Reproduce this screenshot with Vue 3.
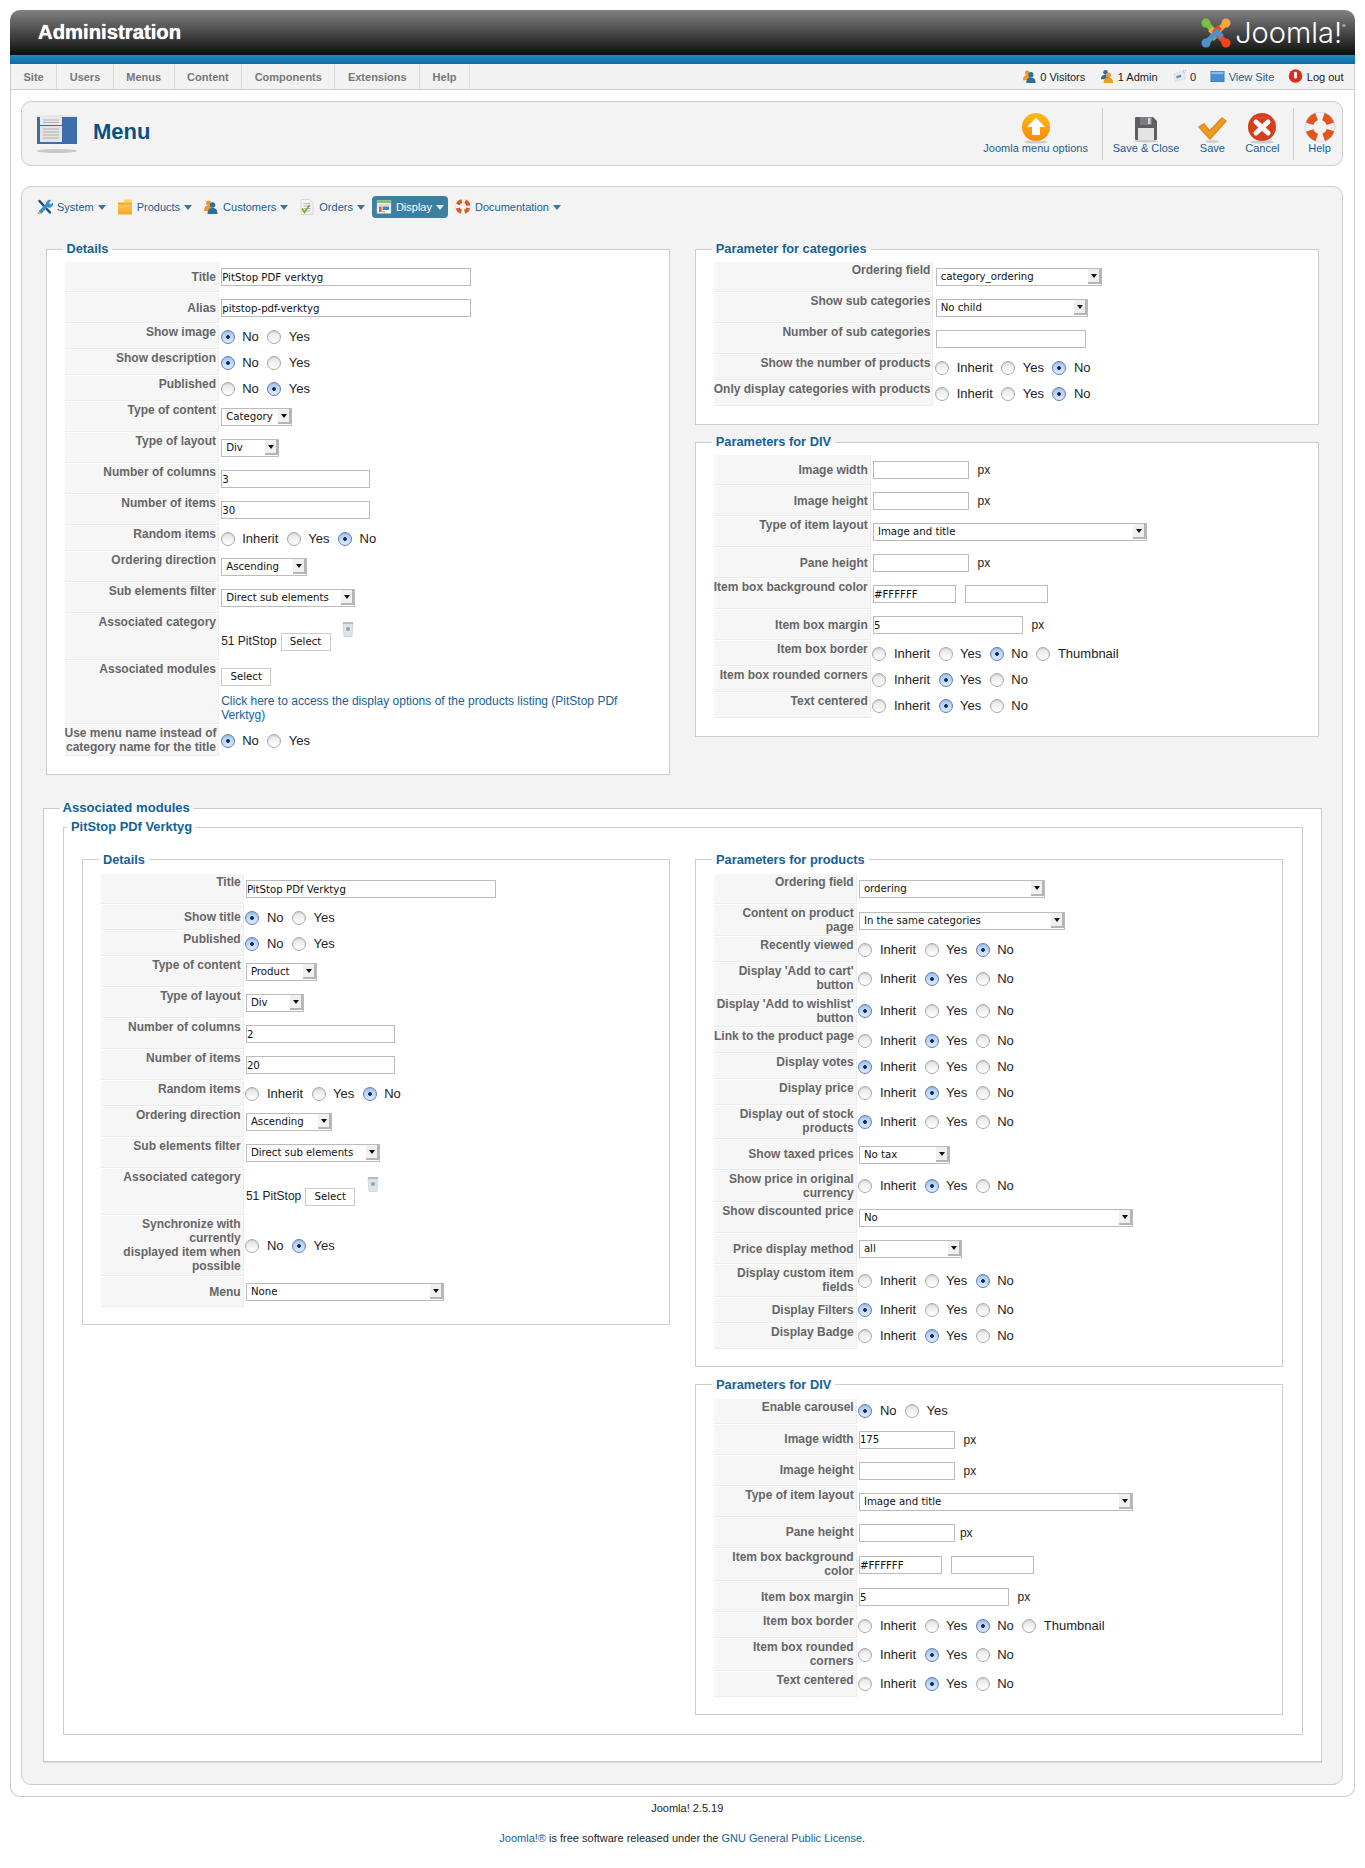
<script setup>
const T = (label, value, w, o = {}) => ({ kind: 'text', label, value, w, ...o })
const S = (label, value, w, o = {}) => ({ kind: 'select', label, value, w, ...o })
const R = (label, opts, on, o = {}) => ({ kind: 'radio', label, opts, on, ...o })
const NY = ['No', 'Yes']
const IYN = ['Inherit', 'Yes', 'No']
const TWO = { h: 31.5 }

const sections = [
  {
    cls: 'top',
    cols: [
      [{
        legend: 'Details', lw: 154.5, rows: [
          T('Title', 'PitStop PDF verktyg', 250, { mid: true }),
          T('Alias', 'pitstop-pdf-verktyg', 250, { mid: true }),
          R('Show image', NY, 0), R('Show description', NY, 0), R('Published', NY, 1),
          S('Type of content', 'Category', 71), S('Type of layout', 'Div', 58),
          T('Number of columns', '3', 149), T('Number of items', '30', 149),
          R('Random items', IYN, 2),
          S('Ordering direction', 'Ascending', 86), S('Sub elements filter', 'Direct sub elements', 134),
          { kind: 'assoc', label: 'Associated category', h: 45.7 },
          { kind: 'modules', label: 'Associated modules', h: 63.5 },
          R('Use menu name instead of\ncategory name for the title', NY, 0, { h: 31 })
        ]
      }],
      [{
        legend: 'Parameter for categories', lw: 219.7, rows: [
          S('Ordering field', 'category_ordering', 166.7), S('Show sub categories', 'No child', 152),
          T('Number of sub categories', '', 150),
          R('Show the number of products', IYN, 2), R('Only display categories with products', IYN, 2)
        ]
      }, {
        legend: 'Parameters for DIV', lw: 157, rows: [
          T('Image width', '', 96, { mid: true, px: 1 }), T('Image height', '', 96, { mid: true, px: 1 }),
          S('Type of item layout', 'Image and title', 274),
          T('Pane height', '', 96, { mid: true, px: 1 }),
          { kind: 'pair', label: 'Item box background color', value: '#FFFFFF' },
          T('Item box margin', '5', 150, { mid: true, px: 1 }),
          R('Item box border', [...IYN, 'Thumbnail'], 2), R('Item box rounded corners', IYN, 1), R('Text centered', IYN, 1)
        ]
      }]
    ]
  },
  {
    cls: 'mods',
    legend: 'Associated modules',
    sub: 'PitStop PDf Verktyg',
    cols: [
      [{
        legend: 'Details', lw: 142.7, rows: [
          T('Title', 'PitStop PDf Verktyg', 250),
          R('Show title', NY, 0, { mid: true }), R('Published', NY, 0),
          S('Type of content', 'Product', 71), S('Type of layout', 'Div', 58),
          T('Number of columns', '2', 149), T('Number of items', '20', 149),
          R('Random items', IYN, 2),
          S('Ordering direction', 'Ascending', 86.5), S('Sub elements filter', 'Direct sub elements', 134.5),
          { kind: 'assoc', label: 'Associated category', h: 46 },
          R('Synchronize with\ncurrently\ndisplayed item when\npossible', NY, 1, { h: 60 }),
          S('Menu', 'None', 198, { mid: true })
        ]
      }],
      [{
        legend: 'Parameters for products', lw: 142.7, rows: [
          S('Ordering field', 'ordering', 186),
          S('Content on product\npage', 'In the same categories', 206, { h: 31 }),
          R('Recently viewed', IYN, 2),
          R("Display 'Add to cart'\nbutton", IYN, 1, TWO), R("Display 'Add to wishlist'\nbutton", IYN, 0, TWO),
          R('Link to the product page', IYN, 1), R('Display votes', IYN, 0), R('Display price', IYN, 1),
          R('Display out of stock\nproducts', IYN, 0, { h: 32.4 }),
          S('Show taxed prices', 'No tax', 91.5, { mid: true }),
          R('Show price in original\ncurrency', IYN, 1, TWO),
          S('Show discounted price', 'No', 274),
          S('Price display method', 'all', 103, { mid: true }),
          R('Display custom item\nfields', IYN, 2, { h: 31.7 }),
          R('Display Filters', IYN, 0, { mid: true }), R('Display Badge', IYN, 1)
        ]
      }, {
        legend: 'Parameters for DIV', lw: 142.7, rows: [
          R('Enable carousel', NY, 0),
          T('Image width', '175', 96, { mid: true, px: 1 }), T('Image height', '', 96, { mid: true, px: 1 }),
          S('Type of item layout', 'Image and title', 274),
          T('Pane height', '', 96, { mid: true, px: 1, tight: true }),
          { kind: 'pair', label: 'Item box background\ncolor', value: '#FFFFFF', h: 32.2 },
          T('Item box margin', '5', 150, { mid: true, px: 1 }),
          R('Item box border', [...IYN, 'Thumbnail'], 2),
          R('Item box rounded\ncorners', IYN, 1, { h: 31.4 }), R('Text centered', IYN, 1)
        ]
      }]
    ]
  }
]

const rowH = r => r.h ?? (r.kind === 'radio' ? 25 : 30)
const px = v => v + 'px'

const menus = ['Site', 'Users', 'Menus', 'Content', 'Components', 'Extensions', 'Help']
const status = [
  { icon: 'users', text: '0 Visitors' }, { icon: 'users2', text: '1 Admin' },
  { icon: 'msg', text: '0' }, { icon: 'view', text: 'View Site', link: true }, { icon: 'logout', text: 'Log out' }
]
const tools = [
  { icon: 'up', text: 'Joomla menu options' }, { sep: true },
  { icon: 'floppy', text: 'Save & Close' }, { icon: 'check', text: 'Save' }, { icon: 'cancel', text: 'Cancel' }, { sep: true },
  { icon: 'ring', text: 'Help', cls: 'help' }
]
const nav = [
  { icon: 'tools', text: 'System' }, { icon: 'box', text: 'Products' }, { icon: 'users', text: 'Customers' },
  { icon: 'orders', text: 'Orders' }, { icon: 'display', text: 'Display', on: true }, { icon: 'ring', text: 'Documentation' }
]
const ringPaths = `<circle cx="16" cy="15" r="11" fill="none" stroke="#f1f1f1" stroke-width="8"/>
<circle cx="16" cy="15" r="11" fill="none" stroke="#e0561f" stroke-width="8" stroke-dasharray="10.3 7" stroke-dashoffset="-3.1"/>
<circle cx="16" cy="15" r="15" fill="none" stroke="#c9c9c9" stroke-width=".6"/>`
const icons = {
  up: `<defs><linearGradient id="gu" x1="0" y1="0" x2="0" y2="1"><stop offset="0" stop-color="#ffb915"/><stop offset="1" stop-color="#f98a05"/></linearGradient></defs>
<ellipse cx="16" cy="30" rx="12" ry="1.6" fill="#ccc"/><circle cx="16" cy="15" r="14" fill="url(#gu)"/><path d="M16 5.5 25 15h-5v8h-8v-8H7z" fill="#fff"/>`,
  floppy: `<ellipse cx="16" cy="29" rx="12" ry="1.5" fill="#ccc"/><path d="M6 5h17l4 4v18a1 1 0 0 1-1 1H6a1 1 0 0 1-1-1V6a1 1 0 0 1 1-1z" fill="#5d5f63"/><rect x="10" y="5" width="12" height="8" fill="#7b7d80"/><rect x="18" y="6" width="2.5" height="6" fill="#d5d5d5"/><rect x="8" y="16" width="16" height="12" fill="#e4e4e4"/>`,
  check: `<ellipse cx="16" cy="29.5" rx="7" ry="1.3" fill="#ccc"/><path d="M3 15 8 12 13.500 19 26 6 30 9 14 27z" fill="#f09a22" stroke="#e28a18" stroke-linejoin="round" stroke-width="1.500"/>`,
  cancel: `<ellipse cx="16" cy="30" rx="12" ry="1.600" fill="#ccc"/><circle cx="16" cy="15" r="14" fill="#d63f1c"/><path d="M8 5h16a13 9 0 0 1-16 0z" fill="#e9573b" opacity=".5"/><path d="M10 10l12 11M22 10 10 21" stroke="#fff" stroke-width="5" stroke-linecap="round"/>`,
  ring: ringPaths,
  users: `<circle cx="11" cy="8" r="5" fill="#f09a22"/><path d="M2 24c0-8 4-11 9-11s9 3 9 11z" fill="#f09a22"/><circle cx="19" cy="12" r="5.500" fill="#2b6f9f"/><path d="M9 30c0-9 4-12 10-12s10 3 10 12z" fill="#2b6f9f"/>`,
  users2: `<circle cx="14" cy="7" r="5" fill="#2b6f9f"/><path d="M4 22c0-7 4-10 10-10s9 3 9 10z" fill="#2b6f9f"/><circle cx="20" cy="13" r="5.500" fill="#f09a22"/><path d="M10 30c0-9 4-12 10-12s10 3 10 12z" fill="#f09a22"/>`,
  msg: `<path d="M4 10 25 4l3 17-21 6z" fill="#e6eaee" stroke="#c9ced3"/><path d="M9 15l10-3 1 5-10 3z" fill="#5c93bd"/><rect x="24" y="3" width="5" height="5" fill="#fff" stroke="#8aa9c4"/>`,
  view: `<rect x="2" y="5" width="28" height="22" fill="#4a8fd6" stroke="#2f6ea8" stroke-width="1.500"/><rect x="3" y="6" width="26" height="5" fill="#8ebbe8"/>`,
  logout: `<circle cx="16" cy="15" r="14.500" fill="#d8301a"/><rect x="13" y="6" width="6" height="14" rx="2.500" fill="#fff"/>`,
  tools: `<path d="M5 4 26 27" stroke="#1f4e79" stroke-width="5" stroke-linecap="round"/><path d="M6 27 22 10" stroke="#3d8ec9" stroke-width="7"/><path d="M18 11a8 8 0 0 1 10-9l-4 6 3 3 5-4a8 8 0 0 1-10 10z" fill="#3d8ec9"/><path d="M3 25l4 4-3 2-3-3z" fill="#f09a22"/>`,
  box: `<defs><linearGradient id="gb" x1="0" y1="0" x2="0" y2="1"><stop offset="0" stop-color="#ffd777"/><stop offset="1" stop-color="#f7a520"/></linearGradient></defs><path d="M2 6h11l2-5h15v30H2z" fill="url(#gb)"/><rect x="2" y="8" width="28" height="3" fill="#f5a623"/>`,
  orders: `<path d="M4 1h17l7 7v23H4z" fill="#f4f4f4" stroke="#b9b9b9"/><path d="M9 9h14M9 14h14M9 19h14M9 24h14" stroke="#a5a5a5" stroke-width="1.500"/><path d="M6 19l5 8 10-15" fill="none" stroke="#7cae3c" stroke-width="3.500"/>`,
  display: `<rect x="2" y="3" width="28" height="26" fill="#f6f6f6" stroke="#a5b6bd"/><rect x="2" y="3" width="28" height="5" fill="#8cc06b"/><rect x="5" y="11" width="22" height="2" fill="#c0c0c0"/><rect x="6" y="15" width="5" height="11" fill="#e0563a"/><rect x="13" y="15" width="13" height="7" fill="#3e86c4"/><rect x="13" y="24" width="5" height="3" fill="#f0a83a"/>`,
  page: `<ellipse cx="21" cy="37" rx="20" ry="2" fill="#c9c9c9"/><rect x="1" y="1" width="40" height="29" fill="#3d6cab"/><rect x="1" y="1" width="40" height="2" fill="#e7e7e7"/><rect x="4" y="3" width="22" height="8" fill="#e9e9e9"/><rect x="4" y="12" width="22" height="16" fill="#e4e4e4"/><path d="M7 15h16M7 18h16M7 21h16M7 24h16M7 6h16M7 8.500h16" stroke="#a3a3a3" stroke-width=".8"/>`
}
const joomlaArms = ['#7ac143', '#f9a541', '#f44321', '#5091cd']
</script>

<template>
  <div class="page">
    <header class="head">
      <h1 class="brand">Administration</h1>
      <div class="logo">
        <svg class="logo-mark" viewBox="0 0 30 30" aria-hidden="true">
          <g v-for="(c, i) in joomlaArms" :key="c" :transform="`rotate(${i * 90} 15 15)`">
            <path d="M5 5 16 16 11 21" fill="none" :stroke="c" stroke-width="5.500" stroke-linejoin="round" />
            <circle cx="5" cy="5" r="4.500" :fill="c" />
          </g>
        </svg>
        <span class="logo-text">Joomla!<sup>®</sup></span>
      </div>
    </header>
    <div class="stripe"></div>
    <div class="frame">
      <nav class="menubar">
        <ul class="menu">
          <li v-for="m in menus" :key="m">{{ m }}</li>
        </ul>
        <div class="status">
          <span v-for="s in status" :key="s.text + s.icon" class="stat" :class="{ link: s.link }">
            <svg class="ic15" viewBox="0 0 32 32" v-html="icons[s.icon]"></svg>{{ s.text }}
          </span>
        </div>
      </nav>
      <div class="body">
        <div class="toolbar">
          <div class="title">
            <svg class="page-ic" viewBox="0 0 42 40" v-html="icons.page"></svg>
            <h2>Menu</h2>
          </div>
          <div class="tools">
            <template v-for="(t, ti) in tools" :key="ti">
              <i v-if="t.sep" class="sep"></i>
              <a v-else class="tool" :class="t.cls">
                <svg class="ic32" viewBox="0 0 32 32" v-html="icons[t.icon]"></svg>
                <span>{{ t.text }}</span>
              </a>
            </template>
          </div>
        </div>

        <div class="content">
          <ul class="nav">
            <li v-for="n in nav" :key="n.text" :class="{ on: n.on }">
              <svg class="ic16" viewBox="0 0 32 32" v-html="icons[n.icon]"></svg>
              <span>{{ n.text }}</span>
              <b class="caret"></b>
            </li>
          </ul>

          <component :is="sec.legend ? 'fieldset' : 'div'" v-for="sec in sections" :key="sec.cls" class="sec" :class="sec.cls">
            <legend v-if="sec.legend">{{ sec.legend }}</legend>
            <component :is="sec.sub ? 'fieldset' : 'div'" class="subsec">
              <legend v-if="sec.sub">{{ sec.sub }}</legend>
              <div class="cols">
                <div v-for="(col, ci) in sec.cols" :key="ci" class="col">
                  <fieldset v-for="fs in col" :key="fs.legend" class="box">
                    <legend>{{ fs.legend }}</legend>
                    <div v-for="r in fs.rows" :key="r.label" class="row" :style="{ height: px(rowH(r)) }">
                      <div class="lab" :class="{ mid: r.mid }" :style="{ width: px(fs.lw) }">{{ r.label }}</div>
                      <div class="val">
                        <template v-if="r.kind === 'text'">
                          <input class="inp" type="text" :value="r.value" :style="{ width: px(r.w) }" />
                          <span v-if="r.px" class="unit" :class="{ tight: r.tight }">px</span>
                        </template>
                        <span v-else-if="r.kind === 'select'" class="sel" :style="{ width: px(r.w) }">
                          <select><option>{{ r.value }}</option></select>
                        </span>
                        <div v-else-if="r.kind === 'radio'" class="radios">
                          <label v-for="(o, oi) in r.opts" :key="o" class="opt">
                            <input class="rd" type="radio" :name="sec.cls + fs.legend + r.label" :checked="oi === r.on" />{{ o }}
                          </label>
                        </div>
                        <div v-else-if="r.kind === 'pair'" class="pair">
                          <input class="inp short" type="text" :value="r.value" />
                          <input class="inp short" type="text" value="" />
                        </div>
                        <div v-else-if="r.kind === 'assoc'" class="assoc">
                          <span class="assoc-name">51 PitStop</span>
                          <button class="btn" type="button">Select</button>
                          <svg class="trash" viewBox="0 0 12 16" aria-hidden="true">
                            <path d="M1 2.500h10L10 15.500H2z" fill="#dfe3e6" stroke="#c2c6c9" stroke-width=".6" />
                            <rect x="1" y="1" width="10" height="2" fill="#b8bcbf" />
                            <circle cx="6" cy="8" r="2" fill="#7fa6cc" />
                          </svg>
                        </div>
                        <div v-else-if="r.kind === 'modules'" class="modules">
                          <button class="btn" type="button">Select</button>
                          <a class="mod-link">Click here to access the display options of the products listing (PitStop PDf Verktyg)</a>
                        </div>
                      </div>
                    </div>
                  </fieldset>
                </div>
              </div>
            </component>
          </component>
        </div>
      </div>
    </div>
    <footer class="foot">
      <p class="ver">Joomla! 2.5.19</p>
      <p class="lic"><a>Joomla!®</a> is free software released under the <a>GNU General Public License</a>.</p>
    </footer>
  </div>
</template>

<style>
html, body { margin: 0; background: #fff; }
</style>

<style scoped>
.page { padding: 10px 10.5px 0 10px; font-family: "Liberation Sans", Arial, sans-serif; font-size: 11px; color: #333; }
.head { height: 45px; border-radius: 10px 10px 0 0; background: linear-gradient(#828282, #0e0e0e); display: flex; justify-content: space-between; align-items: center; padding: 0 9px 0 28px; }
.brand { margin: 0; font-size: 20.300px; line-height: 45px; font-weight: bold; color: #fff; text-shadow: 0 0 1px #fff; }
.logo { display: flex; align-items: center; gap: 4px; }
.logo-mark { width: 30px; height: 30px; }
.logo-text { font-family: Inter, sans-serif; font-weight: 300; font-size: 29px; color: #fff; line-height: 30px; }
.logo-text sup { font-size: 5px; vertical-align: 15px; line-height: 0; }
.stripe { height: 9px; background: linear-gradient(#1c8ac0, #0f6ea3); }
.frame { border: 1px solid #ccc; border-top: 0; border-radius: 0 0 10px 10px; background: #fff; }
.menubar { box-sizing: border-box; display: flex; justify-content: space-between; align-items: stretch; height: 26px; background: #f2f2f2; border-bottom: 1px solid #ccc; }
.menu { list-style: none; margin: 0; padding: 0; display: flex; }
.menu li { padding: 0 12.500px; line-height: 26px; font-weight: bold; font-size: 11px; color: #777; border-right: 1px solid #d9d9d9; }
.status { display: flex; align-items: center; gap: 14px; padding-right: 10px; color: #222; }
.stat { display: flex; align-items: center; gap: 3.500px; }
.stat.link { color: #1b5e8e; }
.ic15 { width: 15px; height: 15px; flex: none; }
.ic16 { width: 16px; height: 16px; flex: none; }
.body { padding: 11px 10.500px 11px 10px; }
.toolbar { height: 65px; box-sizing: border-box; display: flex; justify-content: space-between; align-items: center; background: #f3f3f3; border: 1px solid #ccc; border-radius: 10px; padding: 0 1px 0 14px; }
.title { display: flex; align-items: center; gap: 15px; }
.page-ic { width: 42px; height: 40px; }
.title h2 { margin: -4px 0 0; font-size: 22px; font-weight: bold; color: #0b5184; }
.tools { display: flex; align-items: center; }
.sep { width: 1px; height: 52px; background: #ccc; margin-left: 3.500px; }
.tool { display: flex; flex-direction: column; align-items: center; padding: 0 10.200px; color: #1b5e8e; font-size: 11px; line-height: 13px; }
.tool.help { padding-left: 14px; }
.ic32 { width: 32px; height: 32px; margin: 0 -10px -2px; }
.content { margin-top: 20px; background: #f3f3f3; border: 1px solid #ccc; border-radius: 10px; padding: 9px 20px 22.400px 20.500px; }
.nav { list-style: none; margin: 0 0 0 -9.500px; padding: 0; display: flex; align-items: center; height: 22px; color: #1b5e8e; }
.nav li { display: flex; align-items: center; gap: 4px; padding: 0 4px; height: 22px; margin-right: 3px; border-radius: 4px; }
.nav li.on { background: #3b7fa1; color: #fff; }
.caret { width: 0; height: 0; border: 4px solid transparent; border-top: 5px solid currentColor; border-bottom: 0; opacity: .85; }
.sec { margin: 0; padding: 0; border: 0; min-width: 0; }
.top { margin: 24.200px 3px 0 3px; }
.top .col { gap: 10px; }
.mods .col { gap: 11px; }
.mods { margin: 26px 0 0; padding: 0 18px 26px 19px; border: 1px solid #ccc; background: #fff; box-shadow: 0 1px 0 #ddd; }
.mods > legend { margin-left: -3px; padding: 0 3px; font-size: 13.100px; line-height: 14px; font-weight: bold; color: #146295; }
.subsec { margin: 5px 0 0; padding: 0; border: 0; min-width: 0; }
.mods > .subsec { padding: 18.600px 19px 19px 18.500px; border: 1px solid #ccc; }
.mods > .subsec > legend { margin-left: -15px; padding: 0 3px 0 4px; font-size: 12.900px; line-height: 14px; font-weight: bold; color: #146295; }
.top > .subsec { margin: 0; }
.cols { display: grid; grid-template-columns: 1fr 1fr; gap: 25px; align-items: start; }
.col { display: flex; flex-direction: column; min-width: 0; }
.box { margin: 0; min-width: 0; padding: 6px 18px 17px; border: 1px solid #ccc; background: #fff; }
.mods .box { padding-top: 7.200px; padding-bottom: 16px; }
.box > legend { margin-left: -2px; padding: 0 4px; font-size: 12.800px; line-height: 14px; font-weight: bold; color: #146295; }
.row { display: flex; margin-bottom: 1px; }
.lab { flex: none; box-sizing: border-box; padding: 1px 2px 0 0; background: #f6f6f6; border-right: 1px solid #ececec; border-bottom: 1px solid #ececec; text-align: right; white-space: pre; font-size: 12px; line-height: 14px; font-weight: bold; color: #666; }
.lab.mid { display: flex; align-items: center; justify-content: flex-end; padding-top: 0; }
.val { flex: 1; min-width: 0; display: flex; align-items: center; padding-left: 2.200px; font-size: 13px; color: #222; }
.inp { box-sizing: border-box; height: 18px; margin: 0; padding: 0; border: 1px solid #bbb; background: #fff; font: 10.200px/16px "DejaVu Sans", sans-serif; color: #111; outline: 0; border-radius: 0; }
.unit { margin-left: 8.600px; font-size: 12px; }
.unit.tight { margin-left: 5px; }
.sel { position: relative; display: block; box-sizing: border-box; height: 18px; border: 1px solid #bbb; background: #fff; }
.sel select { appearance: none; -webkit-appearance: none; display: block; width: 100%; height: 16px; margin: 0; padding: 0 16px 0 4px; border: 0; background: transparent; font: 10.200px/16px "DejaVu Sans", sans-serif; color: #111; outline: 0; border-radius: 0; }
.sel::after { content: ""; position: absolute; top: 0; right: 0; width: 13px; height: 15px; box-sizing: border-box; background: #f0f0f0; border-right: 2px solid #b5b5b5; border-bottom: 2px solid #b5b5b5; pointer-events: none; }
.sel::before { content: ""; position: absolute; z-index: 1; top: 5px; right: 4px; width: 0; height: 0; border: 3px solid transparent; border-top: 4px solid #111; border-bottom: 0; pointer-events: none; }
.radios { display: flex; align-items: center; gap: 8.500px; margin-left: -.500px; }
.opt { display: flex; align-items: center; gap: 7.500px; line-height: 14px; }
.rd { appearance: none; -webkit-appearance: none; flex: none; box-sizing: border-box; width: 14px; height: 14px; margin: 0; border-radius: 50%; border: 1px solid #aaa; background: linear-gradient(#e4e4e4, #fff); box-shadow: inset 0 1px 1px rgba(0, 0, 0, .12); }
.rd:checked { border-color: #5d80b3; background: radial-gradient(circle, #0f2a57 0 1.500px, transparent 2.200px), linear-gradient(#a8c8f2, #dde9fb); }
.pair { display: flex; gap: 9px; }
.short { width: 83px; }
.assoc { align-self: stretch; display: flex; align-items: flex-start; font-size: 12px; }
.assoc-name { margin: 20px 4px 0 0; line-height: 14px; }
.btn { box-sizing: border-box; width: 50px; height: 18px; margin: 19px 0 0; padding: 0; border: 1px solid #ccc; background: #fff; font: 10.200px/16px "DejaVu Sans", sans-serif; color: #111; border-radius: 0; }
.trash { width: 12px; height: 16px; margin: 7px 0 0 11.500px; }
.modules { align-self: stretch; padding-top: 7px; font-size: 12px; }
.modules .btn { display: block; margin: 0 0 8px; }
.mod-link { display: block; line-height: 14.300px; color: #146295; }
.foot { text-align: center; font-size: 11px; color: #222; }
.foot p { margin: 0; line-height: 14px; }
.foot a { color: #146295; }
.ver { padding: 4px 0 0 10px; }
.lic { padding-top: 16px; }
</style>
